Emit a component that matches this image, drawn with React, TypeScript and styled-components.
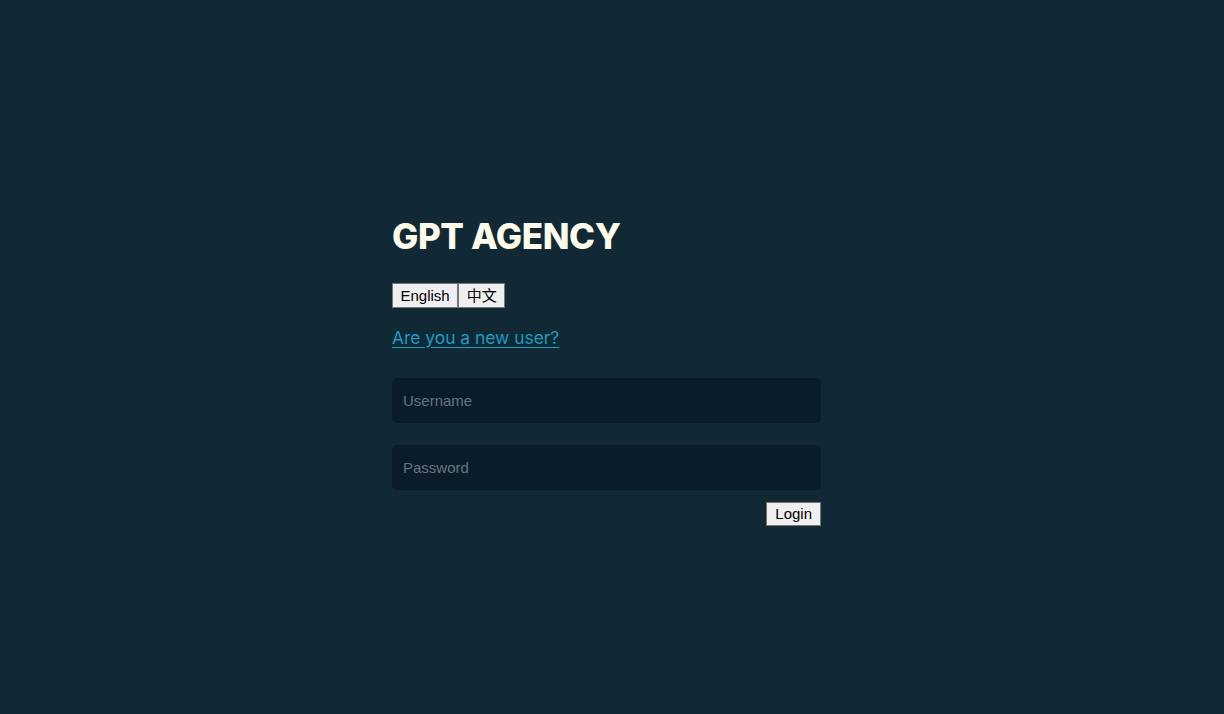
import React from "react";
import styled, { createGlobalStyle } from "styled-components";

const Global = createGlobalStyle`
  html, body { margin: 0; padding: 0; background: #112835; }
  body { min-height: 100vh; font-family: "Liberation Sans", Arial, sans-serif; }
`;

const Page = styled.main`
  min-height: 100vh;
  display: flex;
  justify-content: center;
`;

const Column = styled.div`
  width: 429px;
  padding-right: 11px;
  padding-top: 213px;
  display: flex;
  flex-direction: column;
`;

const Title = styled.h1`
  margin: 0;
  font-family: Inter, "Noto Sans", sans-serif;
  font-weight: 800;
  font-size: 35px;
  line-height: 47px;
  letter-spacing: -0.4px;
  color: #fffaea;
`;

const LangRow = styled.div`
  display: flex;
  margin-top: 23px;
`;

const NativeButton = styled.button`
  font-family: "Liberation Sans", Arial, "Noto Sans CJK SC", sans-serif;
  font-size: 15px;
  line-height: 18px;
  color: #000;
  background: #efefef;
  border: 1px solid #767676;
  border-radius: 0;
  padding: 2.5px 7.5px;
  margin: 0;
  cursor: pointer;
`;

const NewUserLink = styled.a`
  margin-top: 19px;
  align-self: flex-start;
  font-family: Inter, "Noto Sans", sans-serif;
  font-size: 17.4px;
  line-height: 22px;
  color: #1f9cc0;
  text-decoration: underline;
  text-underline-offset: 3px;
  cursor: pointer;
`;

const Field = styled.input<{ $gap: number }>`
  box-sizing: border-box;
  width: 100%;
  height: 45px;
  margin-top: ${(p) => p.$gap}px;
  padding: 0 11px;
  background: #0a1c29;
  border: none;
  border-radius: 5px;
  font-family: "Liberation Sans", Arial, sans-serif;
  font-size: 15px;
  color: #d0d6da;
  outline: none;
  &::placeholder { color: #68747d; }
`;

const Actions = styled.div`
  display: flex;
  justify-content: flex-end;
  margin-top: 12px;
`;

const LoginButton = styled(NativeButton)`
  padding: 2px 8px;
`;

export default function App() {
  return (
    <>
      <Global />
      <Page>
        <Column>
          <Title>GPT AGENCY</Title>
          <LangRow>
            <NativeButton>English</NativeButton>
            <NativeButton>中文</NativeButton>
          </LangRow>
          <NewUserLink>Are you a new user?</NewUserLink>
          <Field $gap={29} placeholder="Username" />
          <Field $gap={22} type="password" placeholder="Password" />
          <Actions>
            <LoginButton>Login</LoginButton>
          </Actions>
        </Column>
      </Page>
    </>
  );
}
